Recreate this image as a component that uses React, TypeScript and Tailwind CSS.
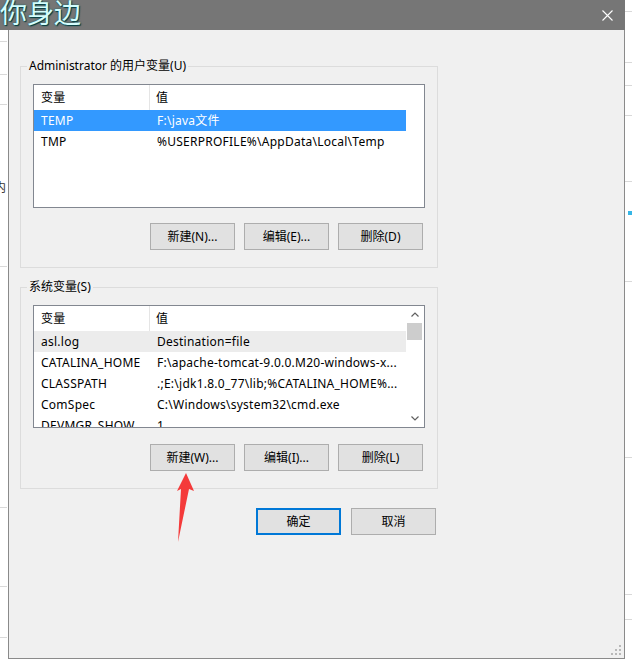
import type { ReactNode } from "react";

type Row = { name: string; value: string };

const userRows: Row[] = [
  { name: "TEMP", value: "F:\\java文件" },
  { name: "TMP", value: "%USERPROFILE%\\AppData\\Local\\Temp" },
];

const systemRows: Row[] = [
  { name: "asl.log", value: "Destination=file" },
  { name: "CATALINA_HOME", value: "F:\\apache-tomcat-9.0.0.M20-windows-x..." },
  { name: "CLASSPATH", value: ".;E:\\jdk1.8.0_77\\lib;%CATALINA_HOME%..." },
  { name: "ComSpec", value: "C:\\Windows\\system32\\cmd.exe" },
  { name: "DEVMGR_SHOW_", value: "1" },
];

function Chevron({ up }: { up?: boolean }) {
  return (
    <svg width="8" height="5" viewBox="0 0 8 5" fill="none" stroke="#606060" strokeWidth="1.2">
      {up ? <path d="M0.5 4.5L4 1l3.5 3.5" /> : <path d="M0.5 0.5L4 4l3.5-3.5" />}
    </svg>
  );
}

function ListView({
  rows,
  height,
  highlight,
  scroll,
}: {
  rows: Row[];
  height: string;
  highlight: "blue" | "gray";
  scroll?: boolean;
}) {
  return (
    <div className={`flex w-[392px] ${height} overflow-hidden border border-[#828790] bg-white tracking-[0.25px]`}>
      <div className="w-[372px] shrink-0">
        {/* header */}
        <div className="flex h-[25px] items-center">
          <div className="flex h-full w-[116px] items-center border-r border-[#e5e5e5] pl-[7px]">变量</div>
          <div className="pl-[6px]">值</div>
        </div>
        {rows.map((r, i) => {
          const hl = i === 0;
          const bg = hl ? (highlight === "blue" ? "bg-[#3399ff] text-white" : "bg-[#ececec]") : "";
          return (
            <div key={r.name} className={`flex h-[21px] items-center whitespace-nowrap ${bg}`}>
              <div className="w-[116px] shrink-0 overflow-hidden pl-[7px]">{r.name}</div>
              <div className="pl-[7px]">{r.value}</div>
            </div>
          );
        })}
      </div>
      {scroll && (
        <div className="flex w-[17px] shrink-0 flex-col">
          <div className="flex h-[17px] items-center justify-center">
            <Chevron up />
          </div>
          <div className="mx-[1px] h-[17px] bg-[#cdcdcd]" />
          <div className="flex-1" />
          <div className="flex h-[17px] items-center justify-center">
            <Chevron />
          </div>
        </div>
      )}
    </div>
  );
}

function Button({ children, primary }: { children: ReactNode; primary?: boolean }) {
  return (
    <div
      className={`flex h-[27px] w-[85px] items-center justify-center bg-[#e1e1e1] ${
        primary ? "border-2 border-[#0078d7]" : "border border-[#adadad]"
      }`}
    >
      {children}
    </div>
  );
}

function GroupBox({ label, children, className }: { label: string; children: ReactNode; className?: string }) {
  return (
    <fieldset className={`w-[418px] border border-[#dcdcdc] pl-[12px] pr-[12px] pb-[17px] ${className ?? ""}`}>
      <legend className="ml-[-6px] px-[2px] text-[12px] leading-[16px]">{label}</legend>
      {children}
    </fieldset>
  );
}

function SideStrip({ lines, className }: { lines: number[]; className?: string }) {
  return (
    <div className={`flex flex-col bg-white ${className ?? ""}`}>
      {lines.map((h, i) => (
        <div key={i} className="shrink-0 border-b border-[#d9d9d9]" style={{ height: h }} />
      ))}
    </div>
  );
}

export default function App() {
  return (
    <div className="relative h-[666px] w-[632px] overflow-hidden bg-white font-['Noto_Sans','Noto_Sans_CJK_SC',sans-serif] text-[12px] text-black">
      {/* title bar */}
      <div className="flex h-[30px]">
        <div className="flex w-[625px] items-start justify-between bg-[#767676]">
          <div className="-mt-[5px] text-[27px] leading-[34px] text-[#d4fdfd] font-['Noto_Sans_CJK_SC',sans-serif] [text-shadow:0_0_2px_#0d5f63,1px_1px_1px_#033]">
            你身边
          </div>
          <div className="mr-[12px] mt-[10px]">
            <svg width="11" height="11" viewBox="0 0 11 11" stroke="white" strokeWidth="1.1">
              <path d="M0.5 0.5l10 10M10.5 0.5l-10 10" />
            </svg>
          </div>
        </div>
        <SideStrip className="w-[7px]" lines={[12, 27]} />
      </div>

      <div className="flex h-[629px]">
        {/* background window (left) */}
        <div className="relative w-[8px]">
          <SideStrip className="h-full w-[7px]" lines={[12, 33, 30, 162, 241, 79, 51]} />
          <div className="absolute left-[-6px] top-[148px] text-[12px] font-['Noto_Sans_CJK_SC',sans-serif] text-[#333]">内</div>
        </div>

        {/* dialog */}
        <div className="relative w-[617px] border-x border-b border-[#8a8a8a] bg-[#f0f0f0] pl-[11px] pt-[28px]">
          <GroupBox label="Administrator 的用户变量(U)">
            <div className="pt-[10px]">
              <ListView rows={userRows} height="h-[124px]" highlight="blue" />
              <div className="mt-[15px] flex justify-end gap-[9px] pr-[2px]">
                <Button>新建(N)...</Button>
                <Button>编辑(E)...</Button>
                <Button>删除(D)</Button>
              </div>
            </div>
          </GroupBox>

          <GroupBox label="系统变量(S)" className="mt-[11px]">
            <div className="pt-[10px]">
              <ListView rows={systemRows} height="h-[123px]" highlight="gray" scroll />
              <div className="mt-[16px] flex justify-end gap-[9px] pr-[2px]">
                <Button>新建(W)...</Button>
                <Button>编辑(I)...</Button>
                <Button>删除(L)</Button>
              </div>
            </div>
          </GroupBox>

          <div className="mt-[19px] flex w-[418px] justify-end gap-[10px] pr-[2px]">
            <Button primary>确定</Button>
            <Button>取消</Button>
          </div>

          {/* resize grip */}
          <svg className="absolute bottom-[3px] right-[3px]" width="10" height="10" viewBox="0 0 10 10" fill="#b8b8b8">
            <rect x="8" y="0" width="2" height="2" />
            <rect x="4" y="4" width="2" height="2" />
            <rect x="8" y="4" width="2" height="2" />
            <rect x="0" y="8" width="2" height="2" />
            <rect x="4" y="8" width="2" height="2" />
            <rect x="8" y="8" width="2" height="2" />
          </svg>
        </div>

        {/* background window (right) */}
        <div className="relative w-[7px]">
          <SideStrip className="h-full w-[7px]" lines={[33, 23, 30, 66, 100, 176, 137, 25]} />
          <div className="absolute left-[3px] top-[181px] h-[4px] w-[4px] bg-[#36b6e6]" />
        </div>
      </div>

      {/* annotation arrow */}
      <svg className="pointer-events-none absolute left-0 top-0" width="632" height="666">
        <polygon points="186,473 194,491 189,489 178,542 181,489 177,491" fill="#f43a3a" />
      </svg>
    </div>
  );
}
